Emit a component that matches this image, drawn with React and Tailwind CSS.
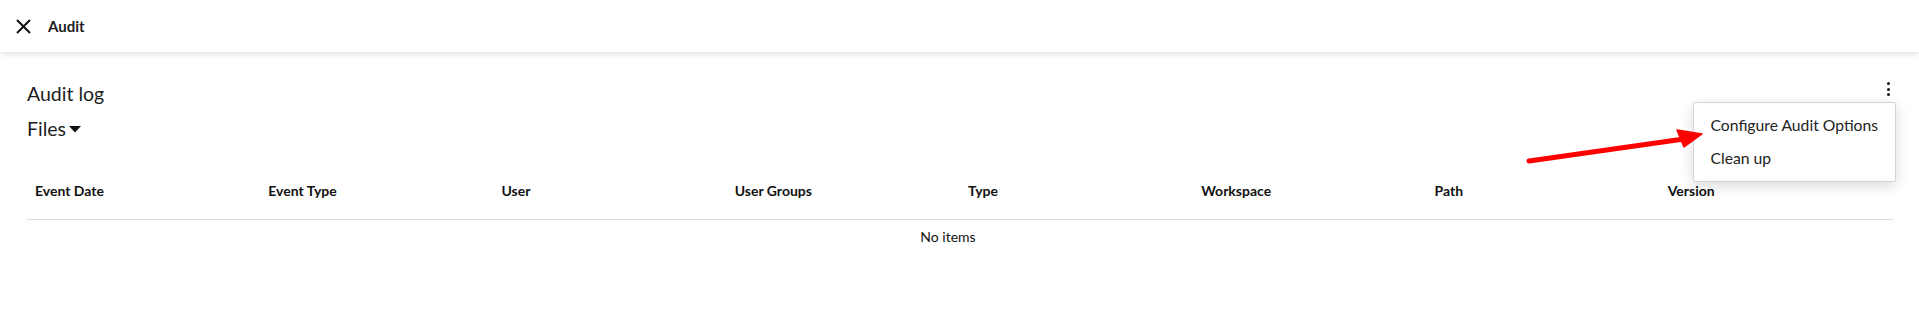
import { useState } from 'react';

const columns = ['Event Date', 'Event Type', 'User', 'User Groups', 'Type', 'Workspace', 'Path', 'Version'];

const App = () => {
    const [menuOpen] = useState(true);

    return (
        <div className="relative min-h-[316px] bg-white text-[#1d1d1d]" style={{ fontFamily: 'Lato, "Noto Sans", sans-serif' }}>
            {/* Top bar */}
            <div className="relative z-10 flex h-[52px] items-center bg-white pl-[16px] shadow-[0_2px_6px_rgba(0,0,0,0.12)]">
                <svg width="15" height="15" viewBox="0 0 15 15" className="shrink-0">
                    <path d="M1 1L14 14M14 1L1 14" stroke="#111" strokeWidth="2" />
                </svg>
                <span className="ml-[17px] text-[15px] font-bold leading-[20px]">Audit</span>
            </div>

            <div className="px-[27px] pr-[26px]">
                {/* Title row */}
                <div className="relative mt-[28px] flex items-start justify-between">
                    <div>
                        <h2 className="text-[19.5px] leading-[28px]">Audit log</h2>
                        <button className="mt-[7px] flex items-center text-[19.5px] leading-[28px]">
                            Files
                            <svg width="12" height="7" viewBox="0 0 12 7" className="ml-[3px] mt-[1px]">
                                <path d="M0 0H12L6 6.5Z" fill="#111" />
                            </svg>
                        </button>
                    </div>
                    <button className="mt-[2px] flex h-[14px] w-[10px] flex-col items-center justify-between">
                        <span className="h-[3px] w-[3px] rounded-full bg-[#111]" />
                        <span className="h-[3px] w-[3px] rounded-full bg-[#111]" />
                        <span className="h-[3px] w-[3px] rounded-full bg-[#111]" />
                    </button>

                    {menuOpen && (
                        <div className="absolute right-[-3px] top-[22px] z-20 whitespace-nowrap rounded-[2px] border border-[#d4d4d4] bg-white py-[6px] shadow-[0_4px_14px_rgba(0,0,0,0.15)]">
                            <div className="flex h-[33px] items-center px-[17px] text-[15.7px] text-[#222]">Configure Audit Options</div>
                            <div className="flex h-[33px] items-center px-[17px] text-[15.7px] text-[#222]">Clean up</div>
                        </div>
                    )}
                </div>

                {/* Table */}
                <div className="mt-[38px] grid grid-cols-8 border-b border-[#dcdcdc] pb-[18px]">
                    {columns.map((col) => (
                        <div key={col} className="pl-[8px] text-[14px] font-bold leading-[20px] text-[#111]">
                            {col}
                        </div>
                    ))}
                </div>
                <div className="pt-[9px] pr-[24px] text-center text-[14px] leading-[16px] text-[#111]">No items</div>
            </div>

            {/* Annotation arrow */}
            <svg className="pointer-events-none absolute left-0 top-0 z-30" width="1919" height="316" viewBox="0 0 1919 316">
                <path d="M1529 161L1684 139" stroke="#ff0000" strokeWidth="5" strokeLinecap="round" />
                <path d="M1702 134L1677 130L1684 147Z" fill="#ff0000" stroke="#ff0000" strokeWidth="1.5" strokeLinejoin="round" />
            </svg>
        </div>
    );
};

export default App;
